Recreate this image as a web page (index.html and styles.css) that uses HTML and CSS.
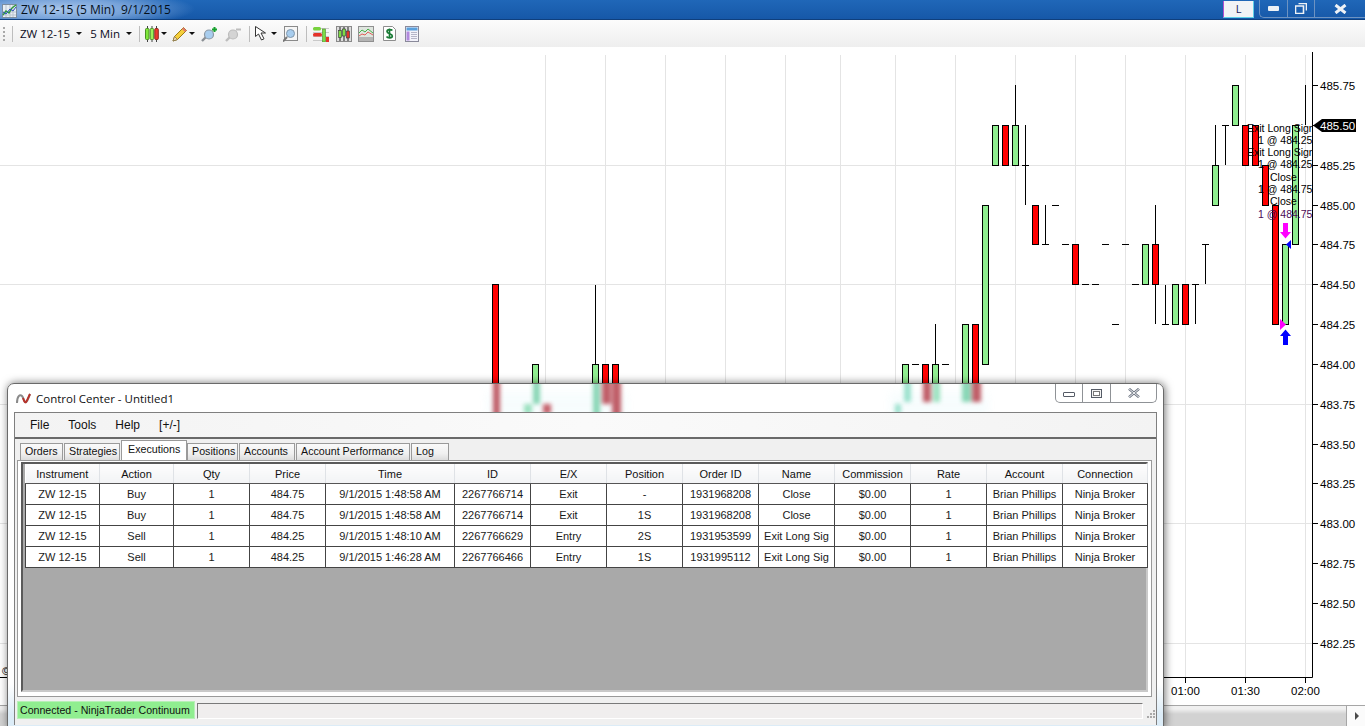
FILE: index.html
```html
<!DOCTYPE html>
<html lang="en">
<head>
    <meta charset="UTF-8">
    <title>ZW 12-15 (5 Min) 9/1/2015</title>
    <link rel="stylesheet" href="styles.css">
</head>
<body>
    <div class="titlebar">
        <svg class="app-icon" width="15" height="14" viewBox="0 0 15 14">
            <rect x="0.5" y="0.5" width="14" height="13" fill="#e8eef4" stroke="#7d8ea0"/>
            <path d="M1 8h13M1 11h13M4 1v12M8 1v12M11 1v12" stroke="#b9c4cf"/>
            <path d="M1 11 4 7l3 2 3-5 4-3" fill="none" stroke="#2d9a3c" stroke-width="1.4"/>
            <path d="M1 8 4 10l4-5 3 2 3-4" fill="none" stroke="#2b4fb8"/>
        </svg>
        <span class="title-text">ZW 12-15 (5 Min)&nbsp; 9/1/2015</span>
        <div class="link-btn">L</div>
        <div class="caption">
            <div class="cap-btn cap-min"><svg width="11" height="5"><rect width="11" height="5" rx="1" fill="#eef2f6"/></svg></div>
            <div class="cap-btn cap-max"><svg width="12" height="11" viewBox="0 0 12 11"><path d="M3.5 .5h8v7M.5 3h8v7.500h-8z" fill="none" stroke="#eef2f6" stroke-width="1.600"/></svg></div>
            <div class="cap-btn cap-close"><svg width="13" height="10" viewBox="0 0 13 10"><path d="M1.500 1 11.500 9M11.500 1 1.500 9" stroke="#eef2f6" stroke-width="3"/></svg></div>
        </div>
    </div>

    <div class="toolbar">
        <div class="grip"></div>
        <div class="sep"></div>
        <span class="tb-label tb-inst">ZW 12-15</span><i class="caret"></i>
        <span class="tb-label tb-period">5 Min</span><i class="caret"></i>
        <div class="sep sep-a"></div>
        <svg class="tb-ico ico-candles" width="14" height="16" viewBox="0 0 14 16">
            <path d="M2.500 0v16M7 0v16M11.500 0v16" stroke="#444"/>
            <rect x="0.500" y="2.500" width="3.500" height="11" rx="1" fill="#7fe83c" stroke="#4c8f26"/>
            <rect x="5.200" y="2.500" width="3.500" height="11" rx="1" fill="#9cf05a" stroke="#4c8f26"/>
            <rect x="9.800" y="2.500" width="3.500" height="11" rx="1" fill="#ee3b2e" stroke="#8c2a20"/>
        </svg><i class="caret"></i>
        <svg class="tb-ico ico-pencil" width="16" height="16" viewBox="0 0 16 16">
            <path d="M1 15 2.500 10.500 11.500 1.500 14.500 4.500 5.500 13.500z" fill="#f5cf3a" stroke="#9a7b18"/>
            <path d="M1 15 2.500 10.500 5.500 13.500z" fill="#f3dcb4" stroke="#7a6a48" stroke-width=".7"/>
            <path d="M11.500 1.500 14.500 4.500 13 6 10 3z" fill="#e2776d"/>
        </svg><i class="caret"></i>
        <svg class="tb-ico ico-zoomin" width="17" height="16" viewBox="0 0 17 16">
            <path d="M1 15 5.500 10.500" stroke="#8a8f94" stroke-width="2.400"/>
            <circle cx="8" cy="8.500" r="4.500" fill="#a8cdee" stroke="#8b98a4" stroke-width="1.200"/>
            <path d="M11 3.500h5M13.500 1v5" stroke="#16a02e" stroke-width="2"/>
        </svg>
        <svg class="tb-ico ico-zoomout" width="17" height="16" viewBox="0 0 17 16">
            <path d="M1 15 5.500 10.500" stroke="#bdbdbd" stroke-width="2.400"/>
            <circle cx="8" cy="8.500" r="4.500" fill="#d4d4d4" stroke="#bcbcbc" stroke-width="1.200"/>
            <path d="M11 3.500h5" stroke="#bdbdbd" stroke-width="2"/>
        </svg>
        <div class="sep sep-b"></div>
        <svg class="tb-ico ico-cursor" width="14" height="15" viewBox="0 0 14 15">
            <path d="M.5.500v10l3-2.500 3 6 2.500-1.200-3-5.800h4.500z" fill="#fff" stroke="#333"/>
        </svg><i class="caret"></i>
        <svg class="tb-ico ico-zoombox" width="15" height="16" viewBox="0 0 15 16">
            <rect x="1.500" y=".5" width="13" height="14" fill="#f6f6f6" stroke="#8a8a8a"/>
            <path d="M0 15.500 4 11" stroke="#777" stroke-width="2"/>
            <circle cx="7.500" cy="7.500" r="4" fill="#a8cdee" stroke="#8198ac"/>
        </svg>
        <div class="sep sep-c"></div>
        <svg class="tb-ico ico-dom" width="16" height="16" viewBox="0 0 16 16">
            <path d="M0 2.500h16M0 6.500h16M0 10.500h16M0 14.500h16" stroke="#c9c9c9"/>
            <rect x="0" y="1" width="8" height="3.500" rx="1.500" fill="#77d13d"/>
            <rect x="0" y="7" width="9" height="3.500" rx="1.500" fill="#e5332a"/>
            <rect x="9.500" y="3" width="3" height="13" fill="#7ddb45" stroke="#4b8a2c" stroke-width=".6"/>
            <rect x="13" y="11" width="3" height="5" fill="#e5332a"/>
        </svg>
        <svg class="tb-ico ico-bars" width="16" height="16" viewBox="0 0 16 16">
            <rect x=".5" y=".5" width="15" height="15" fill="#dedede" stroke="#8a8a8a"/>
            <path d="M4 1v14M8 1v14M12 1v14" stroke="#222"/>
            <rect x="2.500" y="4.500" width="3" height="7" fill="#7ddb45" stroke="#333" stroke-width=".6"/>
            <rect x="6.500" y="3" width="3" height="7" fill="#7ddb45" stroke="#333" stroke-width=".6"/>
            <rect x="10.500" y="5" width="3" height="7" fill="#e5332a" stroke="#333" stroke-width=".6"/>
        </svg>
        <svg class="tb-ico ico-lines" width="16" height="16" viewBox="0 0 16 16">
            <rect x=".5" y=".5" width="15" height="15" fill="#dfe6df" stroke="#909090"/>
            <path d="M1 11h14v4H1z" fill="#b4b4b4"/>
            <path d="M1 7 4 4l3 2 3-3 5 4" fill="none" stroke="#47b04a"/>
            <path d="M1 10 4 8l3 1 3-3 5 3" fill="none" stroke="#e0605a"/>
        </svg>
        <svg class="tb-ico ico-dollar" width="13" height="15" viewBox="0 0 13 15">
            <path d="M.5.500h9l3 3v11H.5z" fill="#fff" stroke="#8d8d8d"/>
            <path d="M9.300 4.500C8.500 3.300 4 3 4 5.500S9.300 7.500 9.300 10 4.500 12.200 3.500 10.500M6.500 2.500v10" fill="none" stroke="#187a34" stroke-width="1.700"/>
        </svg>
        <svg class="tb-ico ico-sheet" width="14" height="16" viewBox="0 0 14 16">
            <rect x=".5" y=".5" width="13" height="15" fill="#f2f2fa" stroke="#8a8a9a"/>
            <rect x="1.500" y="1.500" width="11" height="3" fill="#5aa0dc"/>
            <rect x="1.500" y="5.500" width="3" height="9" fill="#b28add"/>
            <path d="M6 6.500h6M6 8.500h6M6 10.500h6M6 12.500h6" stroke="#b5b5c8"/>
        </svg>
    </div>

    <div class="chart">
        <svg class="chart-svg" width="1365" height="658" viewBox="0 47 1365 658">
            <defs>
                <clipPath id="plot-clip"><rect x="1200" y="100" width="112" height="130"/></clipPath>
            </defs>
            <g class="grid-lines">
                <path d="M0 165.500H1312M0 284.500H1312M0 404.500H1312M0 523.500H1312M0 643.500H1312"/>
                <path d="M545.500 55V677M605.500 55V677M665.500 55V677M725.500 55V677M785.500 55V677M840.500 55V677M895.500 55V677M955.500 55V677M1015.500 55V677M1075.500 55V677M1125.500 55V677M1185.500 55V677M1245.500 55V677M1305.500 55V677"/>
            </g>

            <g class="wicks">
                <path d="M595.500 285V364M935.500 324V364M1015.500 85V125M1025.500 125V205M1022 165.500H1029M1045.500 205V244M1042 244.500H1049M1155.500 205V324M1165.500 285V324M1162 324.500H1169M1195.500 285V324M1192 284.500H1199M1205.500 244V284M1202 244.500H1209M1215.500 125V165M1225.500 125V165M1222 125.500H1229M1305.500 85V125"/>
                <path d="M912 364.500H919M942 364.500H949M1052 205.500H1059M1062 244.500H1069M1082 284.500H1089M1092 284.500H1099M1102 244.500H1109M1112 324.500H1119M1122 244.500H1129M1132 284.500H1139"/>
            </g>
            <g class="candle-up">
                <rect x="532.500" y="364.500" width="6" height="40"/>
                <rect x="592.500" y="364.500" width="6" height="40"/>
                <rect x="902.500" y="364.500" width="6" height="40"/>
                <rect x="932.500" y="364.500" width="6" height="40"/>
                <rect x="962.500" y="324.500" width="6" height="80"/>
                <rect x="982.500" y="205.500" width="6" height="159"/>
                <rect x="992.500" y="125.500" width="6" height="40"/>
                <rect x="1012.500" y="125.500" width="6" height="40"/>
                <rect x="1142.500" y="244.500" width="6" height="40"/>
                <rect x="1172.500" y="284.500" width="6" height="40"/>
                <rect x="1212.500" y="165.500" width="6" height="40"/>
                <rect x="1232.500" y="85.500" width="6" height="40"/>
                <rect x="1282.500" y="244.500" width="6" height="80"/>
                <rect x="1292.500" y="125.500" width="6" height="119"/>
            </g>
            <g class="candle-down">
                <rect x="492.500" y="284.500" width="6" height="120"/>
                <rect x="602.500" y="364.500" width="6" height="40"/>
                <rect x="612.500" y="364.500" width="6" height="40"/>
                <rect x="922.500" y="364.500" width="6" height="40"/>
                <rect x="972.500" y="324.500" width="6" height="80"/>
                <rect x="1002.500" y="125.500" width="6" height="40"/>
                <rect x="1032.500" y="205.500" width="6" height="39"/>
                <rect x="1072.500" y="244.500" width="6" height="40"/>
                <rect x="1152.500" y="244.500" width="6" height="40"/>
                <rect x="1182.500" y="284.500" width="6" height="40"/>
                <rect x="1242.500" y="125.500" width="6" height="40"/>
                <rect x="1252.500" y="125.500" width="6" height="40"/>
                <rect x="1262.500" y="165.500" width="6" height="40"/>
                <rect x="1272.500" y="205.500" width="6" height="119"/>
            </g>

            <path class="mark-sell" d="M1283 223h5v9h3l-5.500 6.500-5.500-6.500h3z"/>
            <path class="mark-sell" d="M1280 319l6 5.500-6 5.500z"/>
            <path class="mark-buy" d="M1283 345h5v-9h3l-5.500-6.500-5.500 6.500h3z"/>
            <path class="mark-buy" d="M1291 240v9l-5-4.500z"/>

            <g class="trade-labels" clip-path="url(#plot-clip)">
                <text x="1247" y="132">Exit Long Sign</text>
                <text x="1258" y="144">1 @ 484.25</text>
                <text x="1247" y="156">Exit Long Sign</text>
                <text x="1258" y="168">1 @ 484.25</text>
                <text x="1270" y="181">Close</text>
                <text x="1258" y="193">1 @ 484.75</text>
                <text x="1270" y="205">Close</text>
                <text class="label-last" x="1258" y="218">1 @ 484.75</text>
            </g>

            <path class="axis" d="M1312.500 52V677.500H0"/>
            <path class="axis" d="M1312 85.500h6M1312 125.500h6M1312 165.500h6M1312 205.500h6M1312 244.500h6M1312 284.500h6M1312 324.500h6M1312 364.500h6M1312 404.500h6M1312 444.500h6M1312 483.500h6M1312 523.500h6M1312 563.500h6M1312 603.500h6M1312 643.500h6M1185.500 677v6M1245.500 677v6M1305.500 677v6"/>
            <g class="axis-text">
                <text x="1320" y="90">485.75</text>
                <text x="1320" y="170">485.25</text>
                <text x="1320" y="210">485.00</text>
                <text x="1320" y="249">484.75</text>
                <text x="1320" y="289">484.50</text>
                <text x="1320" y="329">484.25</text>
                <text x="1320" y="369">484.00</text>
                <text x="1320" y="409">483.75</text>
                <text x="1320" y="449">483.50</text>
                <text x="1320" y="488">483.25</text>
                <text x="1320" y="528">483.00</text>
                <text x="1320" y="568">482.75</text>
                <text x="1320" y="608">482.50</text>
                <text x="1320" y="648">482.25</text>
                <text x="1171" y="695">01:00</text>
                <text x="1231" y="695">01:30</text>
                <text x="1291" y="695">02:00</text>
                <text x="2" y="675">©</text>
            </g>
            <path d="M1313 125.500 1322 119H1356V132H1322z" fill="#000"/>
            <text class="price-tag" x="1320" y="130">485.50</text>
        </svg>
    </div>
    <div class="hscroll">
        <div class="hscroll-track"></div>
        <div class="hscroll-arrow"></div>
    </div>

    <div class="window">
        <svg class="glass-ghost" width="1158" height="28" viewBox="7 384 1158 28">
            <g class="ghost-halo">
                <rect x="487" y="392" width="140" height="26" fill="#d8f4f8"/>
                <rect x="890" y="392" width="98" height="26" fill="#d8f4f8"/>
            </g>
            <g class="ghost-bars">
                <rect x="493" y="380" width="7" height="36" fill="#b5404c"/>
                <rect x="533" y="380" width="7" height="24" fill="#74cfa8"/>
                <rect x="524" y="404" width="8" height="10" fill="#8adcb4"/>
                <rect x="543" y="404" width="8" height="10" fill="#bb4450"/>
                <rect x="593" y="380" width="7" height="36" fill="#74cfa8"/>
                <rect x="602" y="380" width="9" height="24" fill="#b5404c"/>
                <rect x="612" y="380" width="9" height="36" fill="#b5404c"/>
                <rect x="904" y="380" width="7" height="22" fill="#8adcc4"/>
                <rect x="895" y="404" width="6" height="10" fill="#8adcc4"/>
                <rect x="923" y="380" width="8" height="22" fill="#b5404c"/>
                <rect x="933" y="380" width="7" height="22" fill="#8adcb4"/>
                <rect x="962" y="380" width="9" height="22" fill="#74cfa8"/>
                <rect x="972" y="380" width="9" height="22" fill="#b5404c"/>
            </g>
        </svg>
        <div class="win-head">
            <svg class="win-icon" width="15" height="11" viewBox="0 0 15 11">
                <path d="M1 10C1 3 4 1 6 3s2 7 4 6 3-6 4-8" fill="none" stroke="#8a8a8a" stroke-width="2"/>
                <path d="M7 5c1 3 2 5 3 4s3-6 4-8" fill="none" stroke="#b8322a" stroke-width="2"/>
            </svg>
            <span class="win-title">Control Center - Untitled1</span>
        </div>
        <div class="win-caption">
            <div class="wc-btn wc-min"><span></span></div>
            <div class="wc-btn wc-max"><span></span></div>
            <div class="wc-btn wc-close">
                <svg width="12" height="10" viewBox="0 0 12 10"><path d="M1 .8 11 9.200M11 .8 1 9.200" stroke="#6d7480" stroke-width="2.600"/><path d="M1 .8 11 9.200M11 .8 1 9.200" stroke="#eef0f3" stroke-width="1"/></svg>
            </div>
        </div>

        <div class="panel">
            <div class="menu">
                <span class="menu-item">File</span>
                <span class="menu-item">Tools</span>
                <span class="menu-item">Help</span>
                <span class="menu-item">[+/-]</span>
            </div>
            <div class="tabs">
                <div class="tab">Orders</div>
                <div class="tab">Strategies</div>
                <div class="tab active">Executions</div>
                <div class="tab">Positions</div>
                <div class="tab">Accounts</div>
                <div class="tab">Account Performance</div>
                <div class="tab">Log</div>
            </div>
            <div class="tab-page">
                <div class="grid-box">
                    <table class="exec-table">
                        <colgroup>
                            <col class="c74"><col class="c74"><col class="c76"><col class="c76"><col class="c129"><col class="c76"><col class="c76"><col class="c76"><col class="c76"><col class="c76"><col class="c76"><col class="c76"><col class="c76"><col class="c85">
                        </colgroup>
                        <thead>
                            <tr><th>Instrument</th><th>Action</th><th>Qty</th><th>Price</th><th>Time</th><th>ID</th><th>E/X</th><th>Position</th><th>Order ID</th><th>Name</th><th>Commission</th><th>Rate</th><th>Account</th><th>Connection</th></tr>
                        </thead>
                        <tbody>
                            <tr><td>ZW 12-15</td><td>Buy</td><td>1</td><td>484.75</td><td>9/1/2015 1:48:58 AM</td><td>2267766714</td><td>Exit</td><td>-</td><td>1931968208</td><td>Close</td><td>$0.00</td><td>1</td><td>Brian Phillips</td><td>Ninja Broker</td></tr>
                            <tr><td>ZW 12-15</td><td>Buy</td><td>1</td><td>484.75</td><td>9/1/2015 1:48:58 AM</td><td>2267766714</td><td>Exit</td><td>1S</td><td>1931968208</td><td>Close</td><td>$0.00</td><td>1</td><td>Brian Phillips</td><td>Ninja Broker</td></tr>
                            <tr><td>ZW 12-15</td><td>Sell</td><td>1</td><td>484.25</td><td>9/1/2015 1:48:10 AM</td><td>2267766629</td><td>Entry</td><td>2S</td><td>1931953599</td><td>Exit Long Sig</td><td>$0.00</td><td>1</td><td>Brian Phillips</td><td>Ninja Broker</td></tr>
                            <tr><td>ZW 12-15</td><td>Sell</td><td>1</td><td>484.25</td><td>9/1/2015 1:46:28 AM</td><td>2267766466</td><td>Entry</td><td>1S</td><td>1931995112</td><td>Exit Long Sig</td><td>$0.00</td><td>1</td><td>Brian Phillips</td><td>Ninja Broker</td></tr>
                        </tbody>
                    </table>
                </div>
            </div>
            <div class="status">
                <div class="status-conn">Connected - NinjaTrader Continuum</div>
                <div class="status-field"></div>
                <svg class="status-grip" width="10" height="10" viewBox="0 0 10 10"><path d="M7 1h2v2H7zM4 4h2v2H4zM7 4h2v2H7zM1 7h2v2H1zM4 7h2v2H4zM7 7h2v2H7z" fill="#a9a9a9"/></svg>
            </div>
        </div>
    </div>
</body>
</html>
```
FILE: styles.css
```css
body {
    margin: 0;
    width: 1365px;
    height: 726px;
    overflow: hidden;
    position: relative;
    background-color: #fff;
    font-family: "Liberation Sans", Arial, sans-serif;
    font-size: 11px;
    color: #000;
}

/* top title bar */
.titlebar {
    height: 19px;
    display: flex;
    align-items: center;
    position: relative;
    background: radial-gradient(ellipse 135px 20px at 60px 9px, #a9c6ea 0%, #76a2d9 50%, rgba(26, 91, 172, 0) 100%), linear-gradient(#2067b8, #1658a8);
    border-bottom: 1px solid #0f3f7d;
}
.app-icon {
    margin-left: 2px;
    margin-top: 2px;
}
.title-text {
    margin-left: 4px;
    font-family: "Open Sans", sans-serif;
    font-size: 12px;
    color: #05101c;
}
.link-btn {
    margin-left: auto;
    width: 29px;
    height: 16px;
    line-height: 15px;
    text-align: center;
    font-family: "Open Sans", sans-serif;
    font-size: 11px;
    color: #1a1a5a;
    background-color: #f1f3f6;
    border: 1px solid #5fd0e8;
    border-left-color: #b04fd0;
    border-top: 0;
}
.caption {
    margin-left: 5px;
    display: flex;
    height: 17px;
    align-self: flex-start;
    border: 1px solid #6d93c2;
    border-top: 0;
    border-right: 0;
    border-bottom-left-radius: 5px;
}
.cap-btn {
    display: flex;
    align-items: center;
    justify-content: center;
    border-right: 1px solid #6d93c2;
}
.cap-min { width: 27px; }
.cap-max { width: 26px; }
.cap-close { width: 50px; border-right: 0; }

/* chart toolbar */
.toolbar {
    height: 27px;
    display: flex;
    align-items: center;
    background: linear-gradient(#fcfcfc, #eeeeee);
}
.grip {
    width: 2px;
    height: 14px;
    margin-left: 3px;
    background: repeating-linear-gradient(#a9a9a9 0 2px, transparent 2px 4px);
}
.sep {
    width: 1px;
    height: 16px;
    margin-left: 7px;
    background-color: #bdbdbd;
}
.tb-label {
    font-family: "Open Sans", sans-serif;
    font-size: 11.500px;
    color: #0b0b22;
}
.tb-inst { margin-left: 7px; }
.tb-period { margin-left: 8px; }
.caret {
    width: 0;
    height: 0;
    margin-left: 6px;
    border: 3px solid transparent;
    border-top: 3px solid #111;
    border-bottom: 0;
}
.sep-a { margin-left: 7px; }
.tb-ico { flex: none; }
.ico-candles { margin-left: 5px; }
.ico-candles + .caret { margin-left: 2px; }
.ico-pencil { margin-left: 5px; }
.ico-pencil + .caret { margin-left: 1px; }
.ico-zoomin { margin-left: 6px; }
.ico-zoomout { margin-left: 7px; }
.sep-b { margin-left: 7px; }
.ico-cursor { margin-left: 5px; }
.ico-cursor + .caret { margin-left: 2px; }
.ico-zoombox { margin-left: 6px; }
.sep-c { margin-left: 8px; }
.ico-dom { margin-left: 6px; }
.ico-bars { margin-left: 7px; }
.ico-lines { margin-left: 6px; }
.ico-dollar { margin-left: 9px; }
.ico-sheet { margin-left: 9px; }

/* chart */
.chart {
    height: 658px;
}
.chart-svg {
    display: block;
}
.grid-lines path {
    fill: none;
    stroke: #e4e4e4;
    stroke-width: 1;
}
.wicks path {
    fill: none;
    stroke: #000;
    stroke-width: 1;
}
.candle-up rect {
    fill: #90ee90;
    stroke: #000;
    stroke-width: 1;
}
.candle-down rect {
    fill: #ff0000;
    stroke: #000;
    stroke-width: 1;
}
.mark-sell { fill: #ff00ff; }
.mark-buy { fill: #0000ff; }
.trade-labels text {
    font-size: 10.500px;
    fill: #000;
}
.trade-labels .label-last { fill: #4b0a55; }
.axis {
    fill: none;
    stroke: #000;
    stroke-width: 1;
}
.axis-text text {
    font-size: 11.500px;
    fill: #000;
}
.price-tag {
    font-size: 11.500px;
    fill: #fff;
}

.hscroll {
    height: 21px;
    display: flex;
    border-top: 1px solid #a6a6a6;
    box-sizing: border-box;
}
.hscroll-track {
    flex: 1;
    border-right: 1px solid #a6a6a6;
    background: linear-gradient(#f0f0f0 0 3px, #d2d2d2 8px, #d2d2d2);
}
.hscroll-arrow {
    width: 18px;
    position: relative;
    background-color: #fbfbfb;
}
.hscroll-arrow::before {
    content: "";
    position: absolute;
    left: 8px;
    top: 6px;
    border: 4px solid transparent;
    border-left: 4px solid #4a4a4a;
    border-right: 0;
}

/* control center window */
.window {
    position: absolute;
    left: 7px;
    top: 383px;
    width: 1157px;
    height: 346px;
    box-sizing: border-box;
    background: linear-gradient(#fff 0, #fff 300px, #dcecf7 330px);
    border: 1px solid #6a6a6a;
    border-radius: 7px 7px 0 0;
    box-shadow: 1px 0 8px rgba(0, 0, 0, .55);
}
.glass-ghost {
    position: absolute;
    left: -1px;
    top: 0;
}
.ghost-halo {
    filter: blur(5px);
    opacity: .2;
}
.ghost-bars {
    filter: blur(2px);
    opacity: .85;
}
.win-head {
    height: 28px;
    display: flex;
    align-items: center;
    position: relative;
    padding-left: 8px;
}
.win-title {
    margin-left: 5px;
    font-family: "Open Sans", sans-serif;
    font-size: 11.500px;
    color: #111;
}
.win-caption {
    position: absolute;
    top: 0;
    right: 6px;
    height: 18px;
    display: flex;
    border: 1px solid #8f9296;
    border-top: 0;
    border-radius: 0 0 5px 5px;
    background-color: #fff;
}
.wc-btn {
    display: flex;
    align-items: center;
    justify-content: center;
    box-sizing: border-box;
    border-right: 1px solid #8f9296;
}
.wc-min { width: 27px; }
.wc-max { width: 28px; }
.wc-close { width: 45px; border-right: 0; }
.wc-min span {
    width: 10px;
    height: 3px;
    margin-top: 3px;
    border: 1px solid #555b66;
    border-radius: 1px;
}
.wc-max span {
    width: 7px;
    height: 5px;
    border: 1px solid #f4f4f4;
    outline: 1px solid #555b66;
    box-shadow: inset 0 0 0 1px #777;
}

.panel {
    width: 1143px;
    height: 313px;
    margin-left: 6px;
    box-sizing: border-box;
    border: 1px solid #7f7f7f;
    border-bottom: 0;
    background-color: #f0f0f0;
}
.menu {
    height: 24px;
    display: flex;
    align-items: center;
    gap: 19px;
    padding-left: 15px;
    background: linear-gradient(90deg, #f3f3f3, #fafafa 50%, #f3f3f3);
    border-bottom: 2px solid #6a6a6a;
}
.menu-item {
    font-size: 12px;
    color: #111;
}
.tabs {
    display: grid;
    grid-template-columns: 44px 57px 66px 52px 57px 115px 39px;
    height: 20px;
    padding: 1px 0 0 5px;
    align-items: end;
}
.tab {
    height: 17px;
    line-height: 15px;
    padding-left: 4px;
    box-sizing: border-box;
    font-size: 10.700px;
    white-space: nowrap;
    background: linear-gradient(#fafafa, #f0f0f0 60%, #dcdcdc);
    border: 1px solid #9a9a9a;
    border-bottom: 0;
    margin-right: 1px;
    color: #111;
}
.tab.active {
    height: 20px;
    line-height: 17px;
    padding-left: 6px;
    margin-right: 0;
    background: #fff;
    border-color: #9a9a9a;
    position: relative;
    z-index: 1;
}
.tab-page {
    height: 237px;
    margin: 0 4px 0 2px;
    padding: 1px 3px 4px;
    box-sizing: border-box;
    background-color: #fff;
    border: 1px solid #9a9a9a;
}
.grid-box {
    height: 100%;
    box-sizing: border-box;
    padding: 0 0 0 2px;
    background-color: #a9a9a9;
    border: 2px solid;
    border-color: #5a5a5a #c9c9c9 #c9c9c9 #5a5a5a;
}
.exec-table {
    border-collapse: collapse;
    table-layout: fixed;
    width: 1123px;
    background-color: #fff;
}
.c74 { width: 74px; }
.c76 { width: 76px; }
.c129 { width: 129px; }
.c85 { width: 85px; }
.exec-table th {
    height: 19px;
    padding: 0;
    font-weight: normal;
    color: #111;
    background: linear-gradient(#fdfdfd, #f2f3f5);
    border-right: 1px solid #dfe2e6;
    border-bottom: 1px solid #555;
}
.exec-table td {
    height: 20px;
    padding: 0;
    text-align: center;
    color: #1a1a1a;
    border: 1px solid #444;
}
.status {
    height: 18px;
    margin-top: 4px;
    display: flex;
    align-items: flex-end;
    padding-left: 2px;
}
.status-conn {
    width: 178px;
    height: 18px;
    line-height: 17px;
    box-sizing: border-box;
    padding-left: 2px;
    font-size: 10.600px;
    white-space: nowrap;
    overflow: hidden;
    background-color: #90ee90;
    border: 1px solid #b8f0b8;
    color: #111;
}
.status-field {
    width: 946px;
    height: 16px;
    margin-left: 2px;
    box-sizing: border-box;
    background-color: #f0eeee;
    border: 1px solid;
    border-color: #7a7a7a #fff #fff #7a7a7a;
}
.status-grip {
    margin-left: 3px;
    flex: none;
}
```
